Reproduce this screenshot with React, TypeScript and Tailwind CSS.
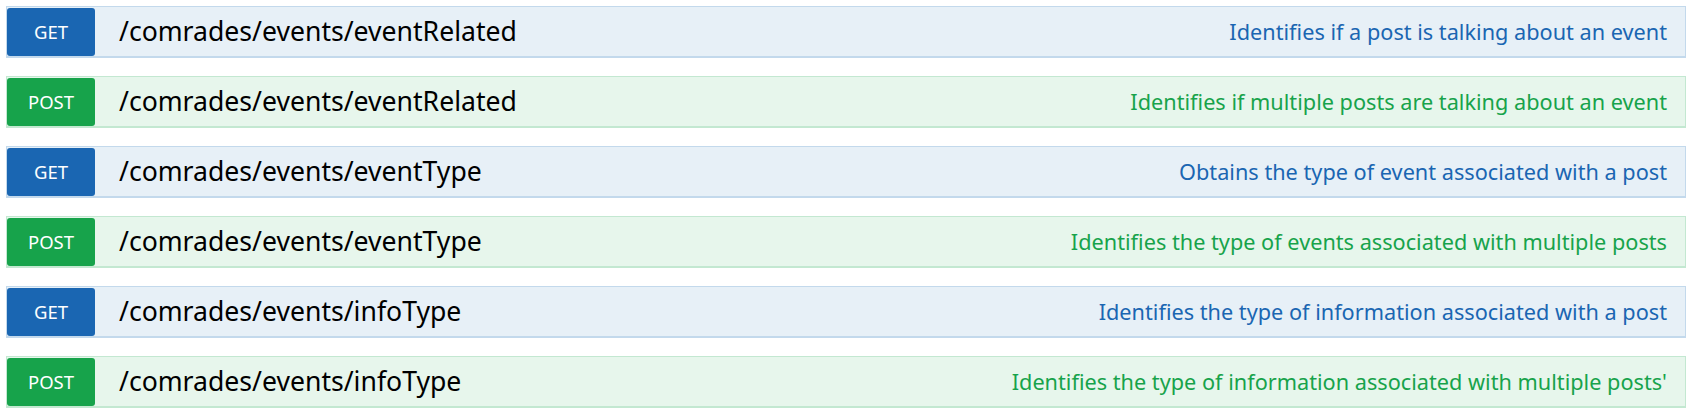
import React from 'react';

type Op = { method: 'GET' | 'POST'; path: string; summary: string };

const ops: Op[] = [
  { method: 'GET', path: '/comrades/events/eventRelated', summary: 'Identifies if a post is talking about an event' },
  { method: 'POST', path: '/comrades/events/eventRelated', summary: 'Identifies if multiple posts are talking about an event' },
  { method: 'GET', path: '/comrades/events/eventType', summary: 'Obtains the type of event associated with a post' },
  { method: 'POST', path: '/comrades/events/eventType', summary: 'Identifies the type of events associated with multiple posts' },
  { method: 'GET', path: '/comrades/events/infoType', summary: 'Identifies the type of information associated with a post' },
  { method: 'POST', path: '/comrades/events/infoType', summary: "Identifies the type of information associated with multiple posts'" },
];

const OperationRow = ({ op }: { op: Op }) => {
  const isGet = op.method === 'GET';
  return (
    <li
      className={
        isGet
          ? 'flex items-center h-[52px] border border-b-2 border-[#c3d9ec] bg-[#e7f0f7]'
          : 'flex items-center h-[52px] border border-b-2 border-[#c3e8d1] bg-[#e7f6ec]'
      }
    >
      <span
        className={
          isGet
            ? 'flex items-center justify-center w-[88px] h-[48px] rounded-[3px] bg-[#1a66b2] text-white text-[18.5px]'
            : 'flex items-center justify-center w-[88px] h-[48px] rounded-[3px] bg-[#17a34b] text-white text-[18.5px]'
        }
      >
        {op.method}
      </span>
      <span className="ml-[24px] text-[26.6px] text-black leading-none">{op.path}</span>
      <span
        className={
          isGet
            ? 'ml-auto pr-[18px] text-[21.7px] text-[#1a66b2] leading-none'
            : 'ml-auto pr-[18px] text-[21.7px] text-[#17a34b] leading-none'
        }
      >
        {op.summary}
      </span>
    </li>
  );
};

export default function App() {
  return (
    <div className="bg-white w-[1693px] h-[417px] px-[6px] pt-[6px] font-['Noto_Sans','Open_Sans',sans-serif]">
      <ul className="flex flex-col gap-[18px] w-[1680px]">
        {ops.map((op, i) => (
          <OperationRow key={i} op={op} />
        ))}
      </ul>
    </div>
  );
}
